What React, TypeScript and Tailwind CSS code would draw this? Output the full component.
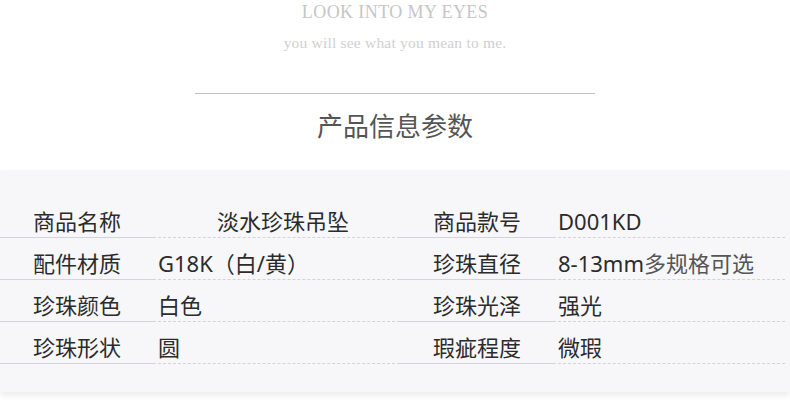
const rows: { left: [string, React.ReactNode]; right: [string, React.ReactNode]; leftPad?: boolean }[] = [
  { left: ["商品名称", "淡水珍珠吊坠"], right: ["商品款号", "D001KD"], leftPad: true },
  { left: ["配件材质", "G18K（白/黄）"], right: ["珍珠直径", <>8-13mm<span className="text-[#555]">多规格可选</span></>] },
  { left: ["珍珠颜色", "白色"], right: ["珍珠光泽", "强光"] },
  { left: ["珍珠形状", "圆"], right: ["瑕疵程度", "微瑕"] },
];

function Cell({ label, value, indent }: { label: string; value: React.ReactNode; indent?: boolean }) {
  return (
    <div className="flex h-[42px]">
      <div className="w-[153px] shrink-0 border-b border-[#d4d4d8] pl-[33px] pt-[10px] leading-[30px]">{label}</div>
      <div
        className={`flex-1 border-b border-dashed border-[#d4d4d8] pt-[10px] leading-[30px] ${indent ? "pl-[64px]" : "pl-[5px]"}`}
      >
        {value}
      </div>
    </div>
  );
}

export default function App() {
  return (
    <div className="h-[411px] w-[790px] overflow-hidden bg-white">
      <div className="flex flex-col items-center" style={{ fontFamily: '"Liberation Serif", serif' }}>
        <p className="text-[18px] leading-[25px] tracking-[0.4px] text-[#c6c6c6]">LOOK INTO MY EYES</p>
        <p className="mt-[8px] text-[15.5px] leading-[20px] tracking-[0.2px] text-[#d0d0d0]">you will see what you mean to me.</p>
      </div>
      <div className="mx-auto mt-[40px] h-px w-[400px] bg-[#c2c2c2]" />
      <h2
        className="mt-[14px] text-center text-[26px] leading-[34px] text-[#555]"
        style={{ fontFamily: '"Noto Sans CJK SC", sans-serif' }}
      >
        产品信息参数
      </h2>
      <div
        className="mt-[28px] bg-[#f7f7fa] pb-[28px] pt-[26px] text-[22px] text-[#2b2b2b] shadow-[0_4px_6px_rgba(0,0,0,0.07)]"
        style={{ fontFamily: '"Noto Sans", "Noto Sans CJK SC", sans-serif' }}
      >
        {rows.map((r, i) => (
          <div key={i} className="grid grid-cols-[400px_1fr] pr-[5px]">
            <Cell label={r.left[0]} value={r.left[1]} indent={r.leftPad} />
            <Cell label={r.right[0]} value={r.right[1]} />
          </div>
        ))}
      </div>
    </div>
  );
}
